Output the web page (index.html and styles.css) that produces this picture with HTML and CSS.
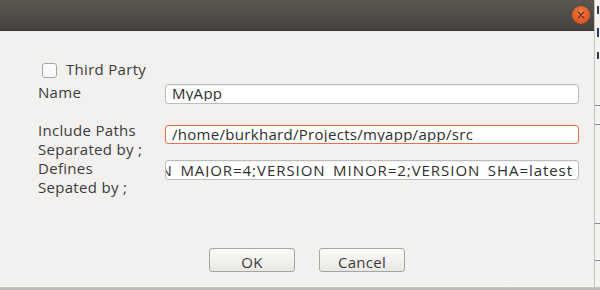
FILE: index.html
```html
<!DOCTYPE html>
<html lang="en">
<head>
    <meta charset="UTF-8">
    <meta name="viewport" content="width=device-width, initial-scale=1.0">
    <title>Project Settings</title>
    <link rel="stylesheet" href="styles.css">
</head>
<body>
    <div class="screen">
        <div class="desk">
            <div class="dialog">
                <div class="titlebar">
                    <span class="close">
                        <svg width="18" height="18" viewBox="0 0 18 18">
                            <path d="M6.2 6.2 L11.8 11.8 M11.8 6.2 L6.2 11.8" stroke="#5a2a14" stroke-width="1.2" stroke-linecap="round"/>
                        </svg>
                    </span>
                </div>
                <div class="body">
                    <div class="form">
                        <label class="check"><span class="box"></span>Third Party</label>

                        <div class="label">Name</div>
                        <div class="field"><span class="text">MyApp</span></div>

                        <div class="label">Include Paths<br>Separated by ;</div>
                        <div class="field focused"><span class="text">/home/burkhard/Projects/myapp/app/src</span></div>

                        <div class="label">Defines<br>Sepated by ;</div>
                        <div class="field scrolled"><span class="text">VERSION_MAJOR=4;VERSION_MINOR=2;VERSION_SHA=latest</span></div>
                    </div>
                    <div class="buttons">
                        <button type="button">OK</button>
                        <button type="button">Cancel</button>
                    </div>
                </div>
            </div>
            <div class="behind">
                <span class="mark m1"></span>
                <span class="mark m2"></span>
                <span class="mark m3"></span>
                <span class="line l1"></span>
                <span class="line l2"></span>
                <span class="line l3"></span>
                <span class="line l4"></span>
            </div>
        </div>
        <div class="shadow"></div>
    </div>
</body>
</html>
```

FILE: styles.css
```css
html, body {
    margin: 0;
    padding: 0;
}
body {
    width: 600px;
    height: 290px;
    overflow: hidden;
    font-family: "Open Sans", "Liberation Sans", sans-serif;
    font-size: 15px;
    letter-spacing: 0.3px;
    color: #3c3c3c;
}
.screen {
    display: flex;
    flex-direction: column;
    height: 290px;
}
.desk {
    display: flex;
    height: 287px;
}
.dialog {
    width: 595px;
    display: flex;
    flex-direction: column;
    border-right: 1px solid #c4c2be;
    box-sizing: border-box;
}
.titlebar {
    height: 31px;
    background: linear-gradient(#5a5750, #45433e);
    display: flex;
    justify-content: flex-end;
    align-items: center;
    padding-right: 4px;
    border-bottom: 1px solid #3a3834;
    box-sizing: border-box;
}
.close {
    width: 18px;
    height: 18px;
    border-radius: 50%;
    background: radial-gradient(circle at 50% 35%, #f47b45, #dd5520 70%, #c94818);
    display: flex;
    margin-top: -1px;
}
.body {
    flex: 1;
    background: #f2f1f0;
    display: flex;
    flex-direction: column;
    padding: 29px 0 15px 38px;
}
.form {
    display: grid;
    grid-template-columns: 127px 414px;
    grid-template-rows: 23px repeat(3, 38px);
    align-items: start;
}
.check {
    grid-column: 1 / 3;
    display: flex;
    align-items: center;
    padding-left: 4px;
    line-height: 19px;
}
.box {
    width: 13px;
    height: 13px;
    border: 1px solid #a9a7a3;
    border-radius: 3px;
    background: linear-gradient(#ffffff, #f6f6f5);
    margin-right: 9px;
    margin-top: 2px;
}
.label {
    line-height: 19px;
    white-space: nowrap;
}
.field {
    height: 20px;
    box-sizing: border-box;
    border: 1px solid #bebcb8;
    border-radius: 3px;
    background: #fff;
    margin-top: 1px;
    padding: 0 5px 0 6px;
    overflow: hidden;
    color: #2e2e2e;
    box-shadow: inset 0 1px 1px rgba(0, 0, 0, 0.06);
}
.field.focused {
    border-color: #e3734a;
    height: 19px;
    margin-top: 4px;
}
.field.scrolled {
    display: flex;
    justify-content: flex-end;
    margin-top: 1px;
    padding-left: 0;
}
.text {
    display: block;
    height: 16px;
    line-height: 17px;
    overflow: hidden;
    white-space: nowrap;
}
.scrolled .text {
    flex-shrink: 0;
    height: 16px;
    line-height: 18px;
    letter-spacing: 0.95px;
}
.buttons {
    margin-top: auto;
    display: flex;
    gap: 24px;
    padding-left: 171px;
}
.buttons button {
    width: 86px;
    height: 24px;
    border: 1px solid #a8a6a2;
    border-radius: 3px;
    background: linear-gradient(#fbfbfa, #e9e7e4);
    font-family: inherit;
    font-size: 15px;
    letter-spacing: 0.3px;
    color: #3c3c3c;
    padding: 4px 0 0 0;
    line-height: 19px;
}
.behind {
    flex: 1;
    background: #f4f3f1;
    position: relative;
}
.mark {
    position: absolute;
    left: 2px;
    width: 2px;
    background: #3a3a4a;
}
.m1 { top: 6px; height: 8px; }
.m2 { top: 28px; height: 9px; background: #2b3b7a; }
.m3 { top: 52px; height: 7px; }
.line {
    position: absolute;
    left: 0;
    right: 0;
    height: 1px;
    background: #8a8a8a;
}
.l1 { top: 105px; }
.l2 { top: 124px; }
.l3 { top: 223px; }
.l4 { top: 260px; }
.shadow {
    flex: 1;
    background: linear-gradient(#c9c7c4, #b3b1ae);
}
```
